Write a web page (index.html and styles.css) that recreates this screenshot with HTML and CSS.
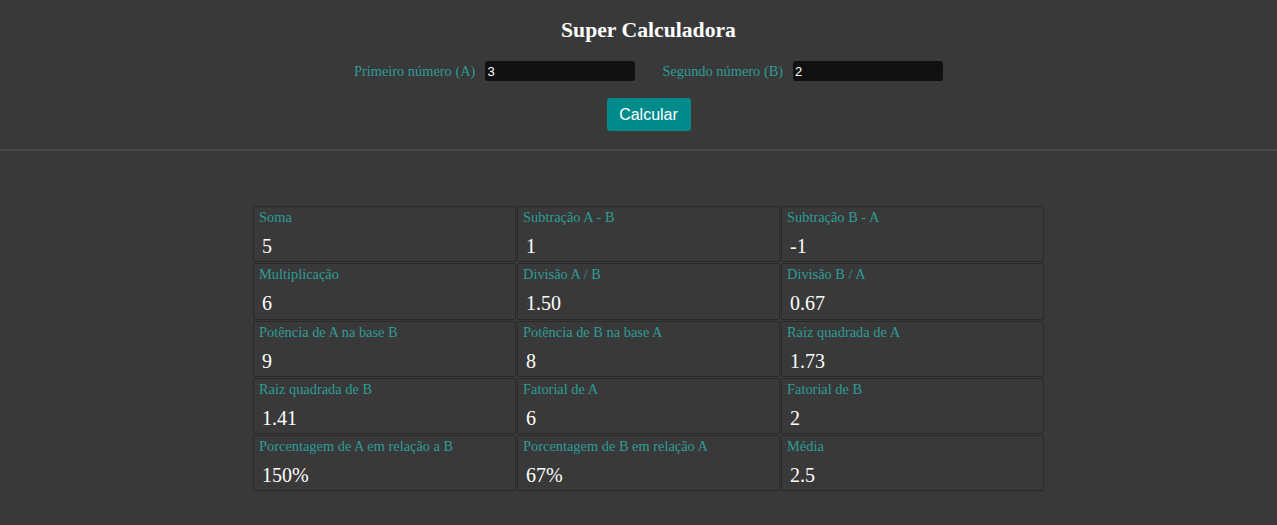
FILE: index.html
```html
<!DOCTYPE html>
<html lang="pt">
<head>
<meta charset="utf-8">
<title>Super Calculadora</title>
<link rel="stylesheet" href="styles.css">
</head>
<body>
<header class="topo">
  <div class="topo-inner">
    <h1 class="titulo">Super Calculadora</h1>
    <div class="entradas">
      <label class="rotulo" for="a">Primeiro número (A)</label>
      <input class="campo" id="a" type="text" value="3">
      <label class="rotulo rotulo-b" for="b">Segundo número (B)</label>
      <input class="campo" id="b" type="text" value="2">
    </div>
    <button class="botao" type="button">Calcular</button>
  </div>
</header>
<main class="conteudo">
  <div class="grade">
    <div class="cel"><div class="nome">Soma</div><div class="valor">5</div></div>
    <div class="cel"><div class="nome">Subtração A - B</div><div class="valor">1</div></div>
    <div class="cel"><div class="nome">Subtração B - A</div><div class="valor">-1</div></div>
    <div class="cel"><div class="nome">Multiplicação</div><div class="valor">6</div></div>
    <div class="cel"><div class="nome">Divisão A / B</div><div class="valor">1.50</div></div>
    <div class="cel"><div class="nome">Divisão B / A</div><div class="valor">0.67</div></div>
    <div class="cel"><div class="nome">Potência de A na base B</div><div class="valor">9</div></div>
    <div class="cel"><div class="nome">Potência de B na base A</div><div class="valor">8</div></div>
    <div class="cel"><div class="nome">Raiz quadrada de A</div><div class="valor">1.73</div></div>
    <div class="cel"><div class="nome">Raiz quadrada de B</div><div class="valor">1.41</div></div>
    <div class="cel"><div class="nome">Fatorial de A</div><div class="valor">6</div></div>
    <div class="cel"><div class="nome">Fatorial de B</div><div class="valor">2</div></div>
    <div class="cel"><div class="nome">Porcentagem de A em relação a B</div><div class="valor">150%</div></div>
    <div class="cel"><div class="nome">Porcentagem de B em relação A</div><div class="valor">67%</div></div>
    <div class="cel"><div class="nome">Média</div><div class="valor">2.5</div></div>
  </div>
</main>
</body>
</html>
```
FILE: styles.css
```css
html, body {
  margin: 0;
  padding: 0;
  background: #393939;
  font-family: "Liberation Serif", "Times New Roman", serif;
  color: #ffffff;
}

.topo {
  border-bottom: 2px solid #474747;
  height: 151px;
  box-sizing: border-box;
}

.topo-inner {
  padding-left: 20px;
  padding-top: 17px;
  display: flex;
  flex-direction: column;
  align-items: center;
}

.titulo {
  margin: 0;
  font-size: 21.7px;
  line-height: 26px;
  font-weight: bold;
  color: #ffffff;
}

.entradas {
  margin-top: 18px;
  display: flex;
  align-items: center;
  height: 20px;
}

.rotulo {
  font-size: 14.4px;
  color: #2e9c96;
  margin-right: 10px;
}

.rotulo-b {
  margin-left: 27px;
}

.campo {
  width: 150px;
  height: 20px;
  box-sizing: border-box;
  background: #111111;
  border: none;
  border-radius: 3px;
  color: #ffffff;
  font-family: "Liberation Sans", Arial, sans-serif;
  font-size: 13px;
  padding: 0 2px;
  outline: none;
}

.botao {
  margin-top: 17px;
  width: 84px;
  height: 33px;
  background: #008b8b;
  color: #ffffff;
  border: none;
  border-radius: 3px;
  font-family: "Liberation Sans", Arial, sans-serif;
  font-size: 16px;
  padding: 0;
}

.conteudo {
  padding-left: 20px;
  padding-top: 55px;
  display: flex;
  justify-content: center;
}

.grade {
  display: grid;
  grid-template-columns: repeat(3, 263px);
  grid-auto-rows: 56.25px;
  column-gap: 1px;
  row-gap: 1px;
}

.cel {
  border: 1px solid #2a2a2a;
  border-radius: 2px;
  box-sizing: border-box;
  padding: 1px 5px 0 5px;
}

.nome {
  font-size: 14.4px;
  line-height: 18px;
  color: #2e9c96;
}

.valor {
  margin-top: 8px;
  padding-left: 3px;
  font-size: 20px;
  line-height: 24px;
  color: #ffffff;
}
```
